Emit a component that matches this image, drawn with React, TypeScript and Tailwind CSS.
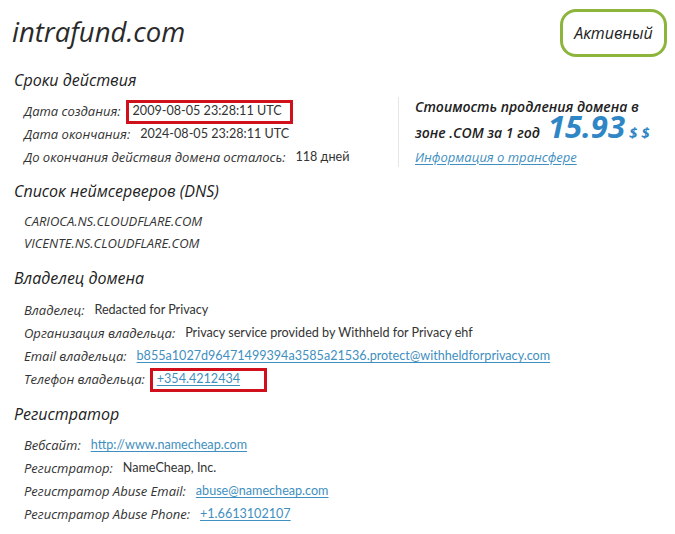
import React from 'react';

const head = "font-['Open_Sans',sans-serif] italic";
const body = "font-['Lato',sans-serif]";

const Label = ({ children, tight }: { children: React.ReactNode; tight?: boolean }) => (
  <span className={`${head} text-[13px] text-[#333] ${tight ? 'mr-[5px]' : 'mr-[10px]'}`}>{children}</span>
);

const Link = ({ children }: { children: React.ReactNode }) => (
  <a href="#" className="text-[#3f8fc0] underline underline-offset-2">{children}</a>
);

function Row({ label, children, boxed, pad }: { label: string; children: React.ReactNode; boxed?: boolean; pad?: string }) {
  return (
    <div className="h-[23px] flex items-center pl-[24px]">
      <Label tight={boxed}>{label}:</Label>
      <span
        className={`${body} text-[12.6px] text-[#333] ${boxed ? `border-[3px] border-[#d0111b] pl-[4px] h-[24px] flex items-center ${pad ?? 'pr-[10px]'}` : ''}`}
      >
        {children}
      </span>
    </div>
  );
}

function Heading({ children }: { children: React.ReactNode }) {
  return <h2 className={`${head} text-[16px] text-[#222] pl-[14px] h-[26px] flex items-center`}>{children}</h2>;
}

export default function App() {
  return (
    <div className="w-[675px] h-[534px] bg-white overflow-hidden text-[#333]">
      <div className="flex items-start justify-between pl-[12px] pr-[8px] pt-[9px]">
        <h1 className={`${head} font-medium text-[27.5px] text-[#2a2a2a] leading-none mt-[9px]`}>intrafund.com</h1>
        <div className="w-[107px] h-[48px] border-[3px] border-[#8db53c] rounded-[16px] flex items-center justify-center">
          <span className={`${head} text-[16px] text-[#222]`}>Активный</span>
        </div>
      </div>

      <div className="mt-[10px]">
        <Heading>Сроки действия</Heading>
        <div className="flex mt-[7px]">
          <div className="w-[398px]">
            <Row label="Дата создания" boxed pad="pr-[8px]">2009-08-05 23:28:11 UTC</Row>
            <Row label="Дата окончания">2024-08-05 23:28:11 UTC</Row>
            <Row label="До окончания действия домена осталось">118 дней</Row>
          </div>
          {/* renewal price block, separated by a thin rule */}
          <div className="border-l border-[#e6e6e6] pl-[16px] h-[70px] -mt-[3px]">
            <div className={`${head} font-semibold text-[14px] text-[#222] leading-[20px]`}>Стоимость продления домена в</div>
            <div className="flex items-baseline -mt-[2px]">
              <span className={`${head} font-semibold text-[14px] text-[#222]`}>зоне .COM за 1 год</span>
              <span className={`${head} font-bold text-[31px] text-[#2f86c5] ml-[8px] leading-[22px]`}>15.93</span>
              <span className={`${head} font-bold text-[15px] text-[#2f86c5] ml-[4px]`}>$ $</span>
            </div>
            <div className={`${head} text-[13px] mt-[4px]`}>
              <Link>Информация о трансфере</Link>
            </div>
          </div>
        </div>
      </div>

      <div className="mt-[9px]">
        <Heading>Список неймсерверов (DNS)</Heading>
        <div className="mt-[7px] pl-[24px]">
          <div className={`${head} text-[13px] h-[22px] flex items-center`}>CARIOCA.NS.CLOUDFLARE.COM</div>
          <div className={`${head} text-[13px] h-[22px] flex items-center`}>VICENTE.NS.CLOUDFLARE.COM</div>
        </div>
      </div>

      <div className="mt-[10px]">
        <Heading>Владелец домена</Heading>
        <div className="mt-[8px]">
          <Row label="Владелец">Redacted for Privacy</Row>
          <Row label="Организация владельца">Privacy service provided by Withheld for Privacy ehf</Row>
          <Row label="Email владельца">
            <Link>b855a1027d96471499394a3585a21536.protect@withheldforprivacy.com</Link>
          </Row>
          <Row label="Телефон владельца" boxed pad="pr-[24px]">
            <Link>+354.4212434</Link>
          </Row>
        </div>
      </div>

      <div className="mt-[10px]">
        <Heading>Регистратор</Heading>
        <div className="mt-[7px]">
          <Row label="Вебсайт"><Link>http://www.namecheap.com</Link></Row>
          <Row label="Регистратор">NameCheap, Inc.</Row>
          <Row label="Регистратор Abuse Email"><Link>abuse@namecheap.com</Link></Row>
          <Row label="Регистратор Abuse Phone"><Link>+1.6613102107</Link></Row>
        </div>
      </div>
    </div>
  );
}
